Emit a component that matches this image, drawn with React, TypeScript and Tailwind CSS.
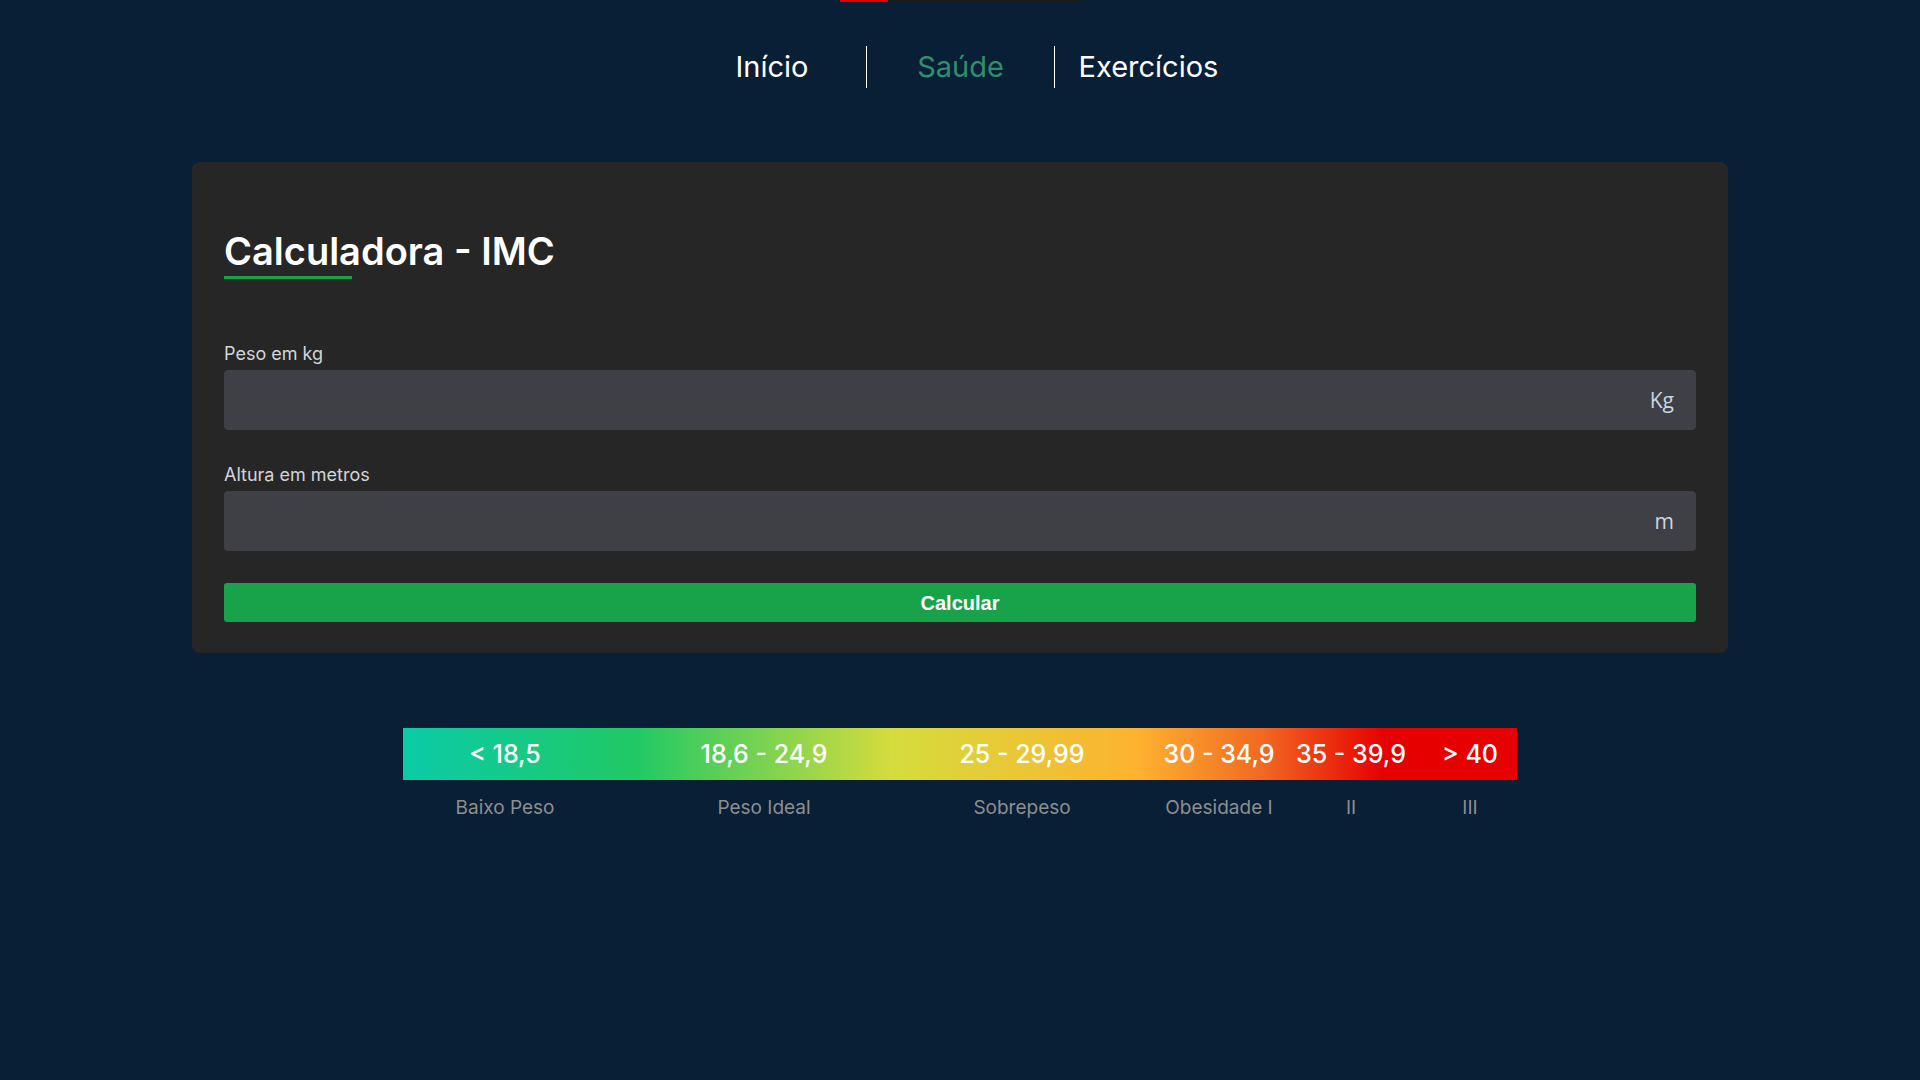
import React from "react";

const cols = [
  { v: "< 18,5", l: "Baixo Peso", ml: "ml-[102px]" },
  { v: "18,6 - 24,9", l: "Peso Ideal", ml: "ml-[259px]" },
  { v: "25 - 29,99", l: "Sobrepeso", ml: "ml-[258px]" },
  { v: "30 - 34,9", l: "Obesidade I", ml: "ml-[197px]" },
  { v: "35 - 39,9", l: "II", ml: "ml-[132px]" },
  { v: "> 40", l: "III", ml: "ml-[119px]" },
];

function Field({ label, unit, first }: { label: string; unit: string; first?: boolean }) {
  return (
    <div className={first ? "mt-[64px]" : "mt-[34px]"}>
      <div className="text-[18px] leading-[22px] text-[#d1d5db]">{label}</div>
      <div className="mt-[5px] flex h-[60px] items-center justify-end rounded bg-[#3f3f46] pr-[22px]">
        <span className="font-['Open_Sans',sans-serif] text-[21px] leading-none text-[#cbd5e1]">{unit}</span>
      </div>
    </div>
  );
}

export default function App() {
  return (
    <div className="min-h-screen bg-[#081f36] font-['Inter',sans-serif]">
      <div className="mx-auto flex h-[2px] w-[241px]">
        <div className="w-[48px] bg-[#e00000]" />
        <div className="flex-1 bg-[#1c1c1c]" />
      </div>

      <nav className="mt-[44px] flex justify-center">
        <a className="flex h-[42px] w-[188px] items-center justify-center text-[29px] text-white">Início</a>
        <a className="flex h-[42px] w-[188px] items-center justify-center border-l border-white text-[29px] text-[#2f8f6d]">Saúde</a>
        <a className="flex h-[42px] w-[188px] items-center justify-center border-l border-white text-[29px] text-white">Exercícios</a>
      </nav>

      <div className="mx-auto mt-[74px] w-[1536px] rounded-lg bg-[#262626] px-8 pb-[31px] pt-[66px]">
        <h1 className="text-[38px] font-semibold leading-[46px] text-white">Calculadora - IMC</h1>
        <div className="mt-[2px] h-[3px] w-[128px] bg-[#16a34a]" />
        <Field label="Peso em kg" unit="Kg" first />
        <Field label="Altura em metros" unit="m" />
        <button className="mt-[32px] flex h-[39px] w-full items-center justify-center rounded-[3px] bg-[#18a34a] font-['Liberation_Sans',Arial,sans-serif] text-[20px] font-bold text-white">
          Calcular
        </button>
      </div>

      <div className="mx-auto mt-[75px] flex w-[1114px] bg-[linear-gradient(to_right,#0bcba8_0%,#21c964_21%,#d6dc3d_44%,#fdb22f_66%,#f26a22_77%,#e60000_88%,#e60000_100%)] bg-[length:100%_52px] bg-no-repeat">
        {cols.map((c) => (
          <div key={c.l} className={`flex w-0 flex-col items-center whitespace-nowrap ${c.ml}`}>
            <div className="flex h-[52px] items-center text-[25px] font-medium leading-none text-white">{c.v}</div>
            <div className="mt-[16px] text-[19px] leading-[23px] text-[#8e8e8e]">{c.l}</div>
          </div>
        ))}
      </div>
    </div>
  );
}
